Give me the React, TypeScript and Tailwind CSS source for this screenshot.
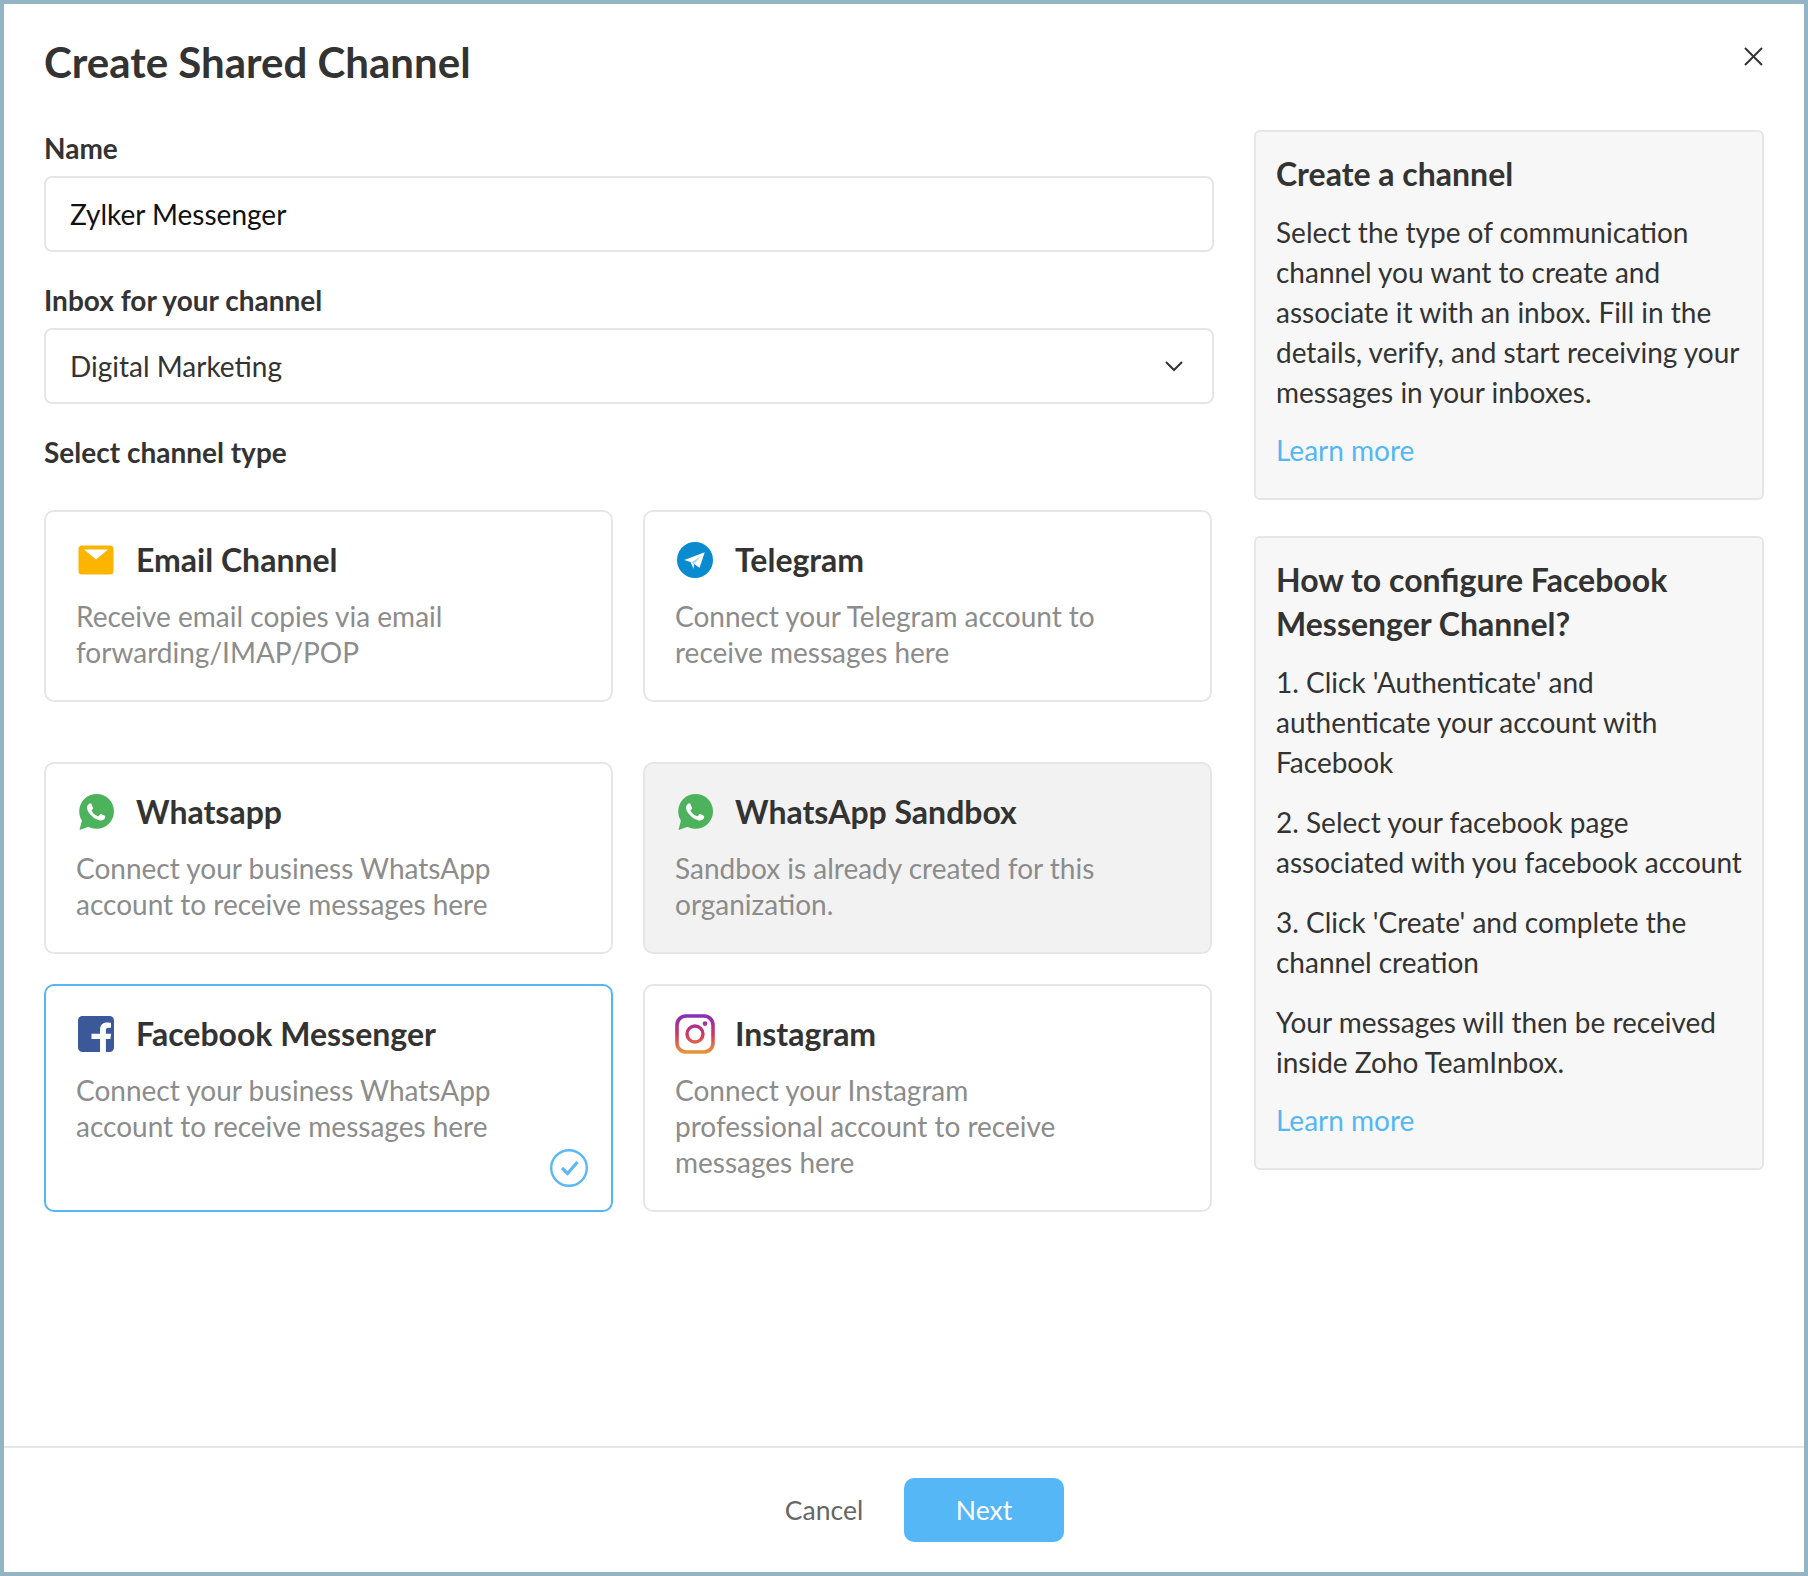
import React from "react";

const Mail = () => (
  <svg width="36" height="30" viewBox="0 0 36 30" className="shrink-0">
    <rect x="0.5" y="0.5" width="35" height="29" rx="3.5" fill="#fbb400" />
    <path d="M6 4.5h24l-12 10z" fill="#fff" />
  </svg>
);

const Telegram = () => (
  <svg width="36" height="36" viewBox="0 0 24 24" className="shrink-0">
    <circle cx="12" cy="12" r="12" fill="#0a8bd0" />
    <path d="M4.8 12 18.5 6.9 15 17.1 11.4 14.6 11 17.8 9 13.4z" fill="#fff" />
    <path d="M9.6 13.6 16.4 9 11.4 14.6z" fill="#0a8bd0" opacity="0.35" />
  </svg>
);

const Whatsapp = () => (
  <svg width="36" height="36" viewBox="0 0 24 24" className="shrink-0">
    <circle cx="12.4" cy="11.6" r="11.6" fill="#4cb35c" />
    <path d="M1 24 2.8 17 8 21.5z" fill="#4cb35c" />
    <path
      fill="#fff"
      d="M17.472 14.382c-.297-.149-1.758-.867-2.03-.967-.273-.099-.471-.148-.67.15-.197.297-.767.966-.94 1.164-.173.199-.347.223-.644.075-.297-.15-1.255-.463-2.39-1.475-.883-.788-1.48-1.761-1.653-2.059-.173-.297-.018-.458.13-.606.134-.133.298-.347.446-.52.149-.174.198-.298.298-.497.099-.198.05-.371-.025-.52-.075-.149-.669-1.612-.916-2.207-.242-.579-.487-.5-.669-.51-.173-.008-.371-.01-.57-.01-.198 0-.52.074-.792.372-.272.297-1.04 1.016-1.04 2.479 0 1.462 1.065 2.875 1.213 3.074.149.198 2.096 3.2 5.077 4.487.709.306 1.262.489 1.694.625.712.227 1.36.195 1.871.118.571-.085 1.758-.719 2.006-1.413.248-.694.248-1.289.173-1.413-.074-.124-.272-.198-.57-.347z"
    />
  </svg>
);

const Facebook = () => (
  <svg width="36" height="36" viewBox="0 0 24 24" className="shrink-0">
    <rect width="24" height="24" rx="3" fill="#3b5998" />
    <path
      fill="#fff"
      d="M18.6 24v-8.6h3l.5-3.6h-3.5V9.6c0-1.1.3-1.8 1.9-1.8H22V4.5c-.3 0-1.4-.2-2.6-.2-2.8 0-4.7 1.7-4.7 4.8v2.7H9v3.6h5.7V24z"
    />
  </svg>
);

const Instagram = () => (
  <svg width="40" height="40" viewBox="0 0 40 40" className="-ml-[2px] shrink-0">
    <defs>
      <linearGradient id="ig" x1="0" y1="0" x2="0" y2="40" gradientUnits="userSpaceOnUse">
        <stop offset="0" stopColor="#7f2fc4" />
        <stop offset="0.5" stopColor="#cf3560" />
        <stop offset="1" stopColor="#e99c3a" />
      </linearGradient>
    </defs>
    <rect x="2" y="2" width="36" height="36" rx="9" fill="none" stroke="url(#ig)" strokeWidth="3.6" />
    <circle cx="20" cy="20" r="8" fill="none" stroke="url(#ig)" strokeWidth="3.4" />
    <circle cx="30" cy="9.6" r="2.3" fill="url(#ig)" />
  </svg>
);

const CheckCircle = () => (
  <svg width="38" height="38" viewBox="0 0 38 38" className="absolute right-[23px] bottom-[23px]">
    <circle cx="19" cy="19" r="17.8" fill="none" stroke="#5ab8f5" strokeWidth="2.4" />
    <path d="M12 19 17.5 24.5 27.5 13" fill="none" stroke="#5ab8f5" strokeWidth="3.2" />
  </svg>
);

type CardProps = {
  icon: React.ReactNode;
  title: string;
  desc: string;
  className?: string;
  selected?: boolean;
};

const Card = ({ icon, title, desc, className = "", selected }: CardProps) => (
  <div
    className={`relative w-[569px] rounded-[10px] border-2 pl-[32px] pr-[30px] pt-[28px] ${
      selected ? "border-[#54b7f3] bg-white" : "border-[#e6e6e6]"
    } ${className}`}
  >
    <div className="flex h-[40px] items-center">
      <div className="flex w-[58px] shrink-0 items-center">{icon}</div>
      <div className="text-[32px] font-bold leading-[40px] text-[#333333]">{title}</div>
    </div>
    <p className="-ml-[2px] mt-[18px] max-w-[430px] text-[28px] leading-[36px] text-[#8c8c8c]">{desc}</p>
    {selected && <CheckCircle />}
  </div>
);

const Label = ({ children }: { children: React.ReactNode }) => (
  <div className="h-[34px] text-[28px] font-bold leading-[34px] text-[#333333]">{children}</div>
);

const Para = ({ children, className = "" }: { children: React.ReactNode; className?: string }) => (
  <p className={`text-[28px] leading-[40px] text-[#333333] ${className}`}>{children}</p>
);

const LearnMore = ({ className = "" }: { className?: string }) => (
  <a className={`block text-[28px] leading-[40px] text-[#54b7f3] ${className}`}>Learn more</a>
);

export default function App() {
  return (
    <div className="flex h-[1576px] w-[1808px] flex-col border-4 border-[#93b4c4] bg-white font-[Lato,sans-serif]">
      <div className="flex flex-1 flex-col px-[40px]">
        <div className="flex h-[85px] items-start justify-between pt-[32px]">
          <h1 className="text-[42px] font-bold leading-[52px] text-[#333333]">Create Shared Channel</h1>
          <svg width="20" height="20" viewBox="0 0 20 20" className="mr-[1px] mt-[10px]">
            <path d="M2 2 19 19M19 2 2 19" stroke="#333333" strokeWidth="2" fill="none" />
          </svg>
        </div>
        <div className="mt-[41px] flex items-start justify-between">
          <div className="w-[1170px] pt-[1px]">
            <Label>Name</Label>
            <div className="mt-[11px] flex h-[76px] items-center rounded-[8px] border-2 border-[#e6e6e6] px-[24px] text-[28px] text-[#111111]">
              Zylker Messenger
            </div>
            <div className="mt-[31px]">
              <Label>Inbox for your channel</Label>
            </div>
            <div className="mt-[11px] flex h-[76px] items-center justify-between rounded-[8px] border-2 border-[#e6e6e6] pl-[24px] pr-[29px] text-[28px] text-[#333333]">
              <span>Digital Marketing</span>
              <svg width="18" height="12" viewBox="0 0 18 12">
                <path d="M1 2 9 10 17 2" stroke="#333333" strokeWidth="2" fill="none" />
              </svg>
            </div>
            <div className="mt-[31px]">
              <Label>Select channel type</Label>
            </div>
            <div className="mt-[41px] flex w-[1168px] flex-col">
              <div className="flex justify-between">
                <Card className="h-[192px]" icon={<Mail />} title="Email Channel" desc="Receive email copies via email forwarding/IMAP/POP" />
                <Card className="h-[192px]" icon={<Telegram />} title="Telegram" desc="Connect your Telegram account to receive messages here" />
              </div>
              <div className="mt-[60px] flex justify-between">
                <Card className="h-[192px]" icon={<Whatsapp />} title="Whatsapp" desc="Connect your business WhatsApp account to receive messages here" />
                <Card className="h-[192px] bg-[#f2f2f2]" icon={<Whatsapp />} title="WhatsApp Sandbox" desc="Sandbox is already created for this organization." />
              </div>
              <div className="mt-[30px] flex justify-between">
                <Card className="h-[228px]" selected icon={<Facebook />} title="Facebook Messenger" desc="Connect your business WhatsApp account to receive messages here" />
                <Card className="h-[228px]" icon={<Instagram />} title="Instagram" desc="Connect your Instagram professional account to receive messages here" />
              </div>
            </div>
          </div>
          <div className="flex w-[510px] flex-col gap-[36px]">
            <div className="h-[370px] rounded-[6px] border-2 border-[#e6e6e6] bg-[#f7f7f7] pl-[20px] pr-[16px] pt-[22px]">
              <h2 className="text-[32px] font-bold leading-[40px] text-[#333333]">Create a channel</h2>
              <Para className="mt-[18px]">
                Select the type of communication channel you want to create and associate it with an inbox. Fill in the details, verify, and start receiving your messages in your inboxes.
              </Para>
              <LearnMore className="mt-[18px]" />
            </div>
            <div className="h-[634px] rounded-[6px] border-2 border-[#e6e6e6] bg-[#f7f7f7] pl-[20px] pr-[16px] pt-[20px]">
              <h2 className="text-[32px] font-bold leading-[44px] text-[#333333]">How to configure Facebook Messenger Channel?</h2>
              <Para className="mt-[16px]">1. Click 'Authenticate' and authenticate your account with Facebook</Para>
              <Para className="mt-[20px]">2. Select your facebook page associated with you facebook account</Para>
              <Para className="mt-[20px]">3. Click 'Create' and complete the channel creation</Para>
              <Para className="mt-[20px]">Your messages will then be received inside Zoho TeamInbox.</Para>
              <LearnMore className="mt-[18px]" />
            </div>
          </div>
        </div>
      </div>
      <div className="flex h-[126px] items-center justify-center border-t-2 border-[#e6e6e6]">
        <button className="h-[64px] w-[160px] pt-[2px] text-[26.5px] text-[#666666]">Cancel</button>
        <button className="h-[64px] w-[160px] rounded-[10px] bg-[#55b7f5] pt-[2px] text-[26.5px] text-white">Next</button>
      </div>
    </div>
  );
}
